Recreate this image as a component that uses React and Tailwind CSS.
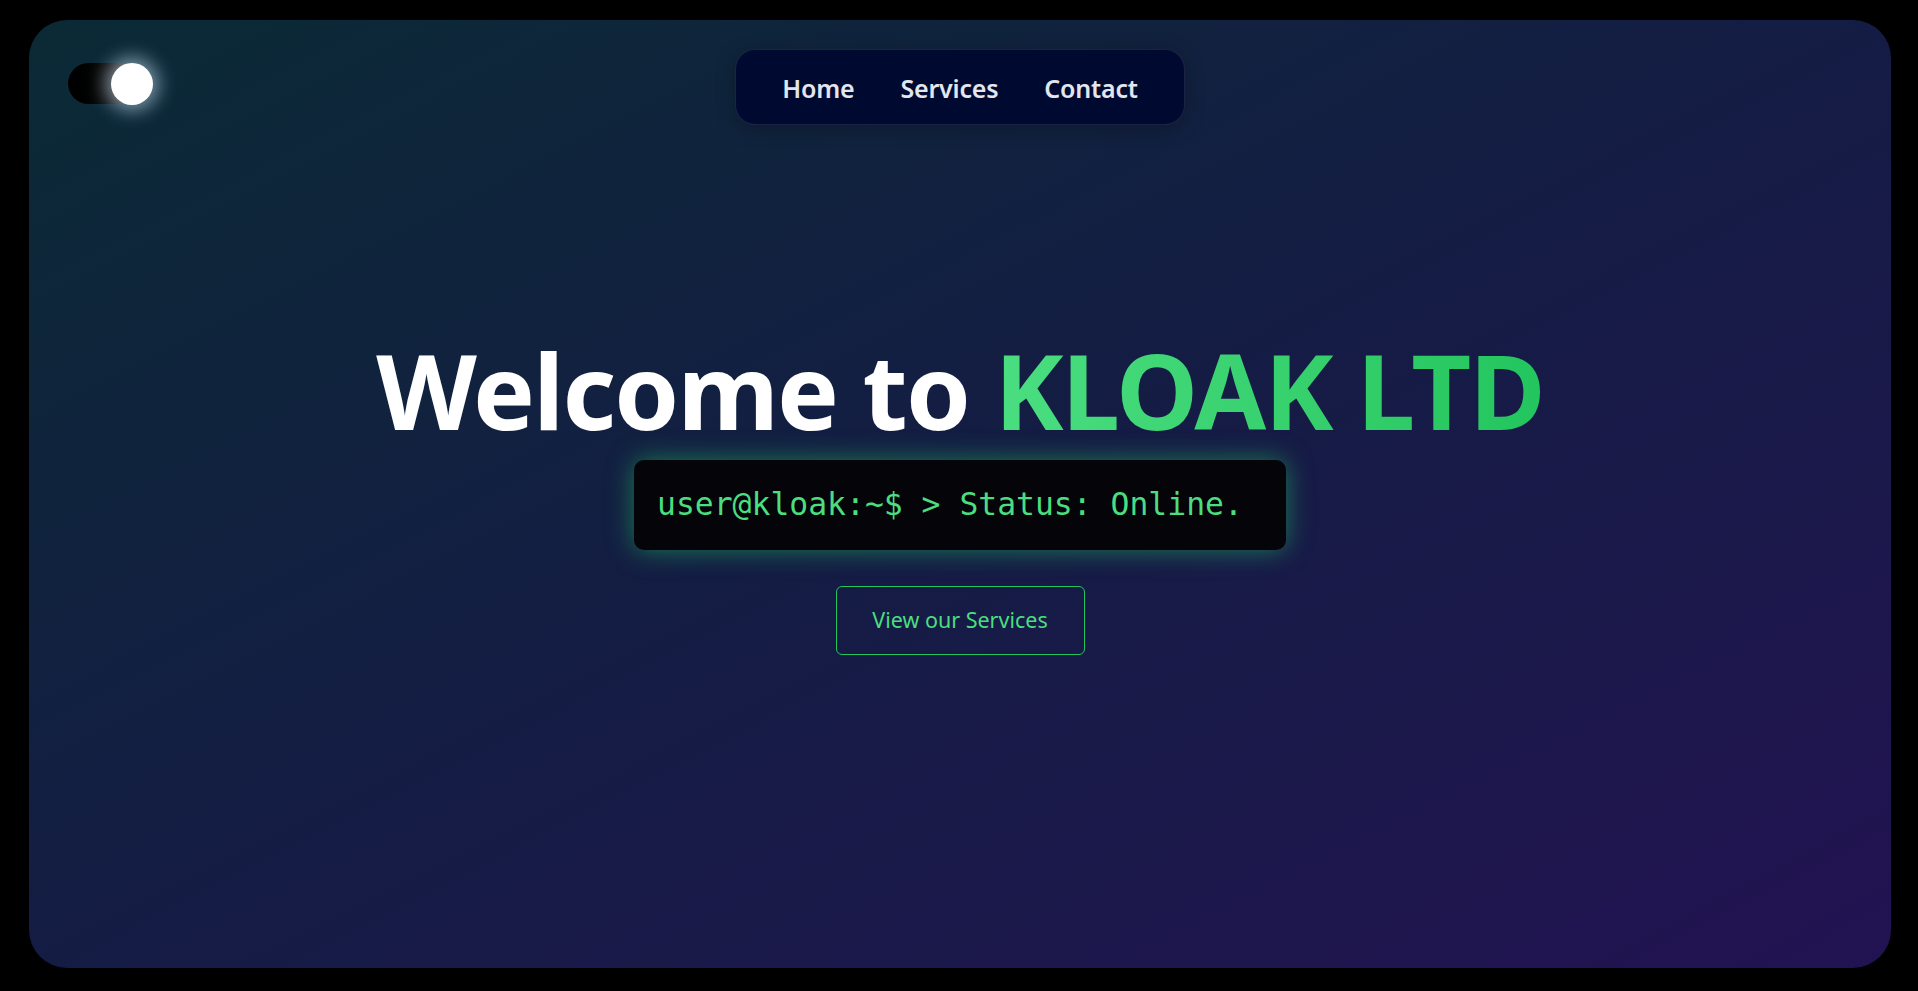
import { useState } from "react";

const navLinks = ["Home", "Services", "Contact"];

function ThemeToggle() {
  const [on, setOn] = useState(true);
  return (
    <button
      onClick={() => setOn(!on)}
      className="relative w-[84px] h-[41px] rounded-full bg-linear-to-r from-black via-[#111] to-[#555]"
    >
      <span className="absolute right-[-1px] top-[-0.5px] w-[42px] h-[42px] rounded-full bg-white shadow-[0_0_18px_6px_rgba(210,235,255,0.55)]" />
    </button>
  );
}

export default function App() {
  return (
    <div
      className="w-screen h-screen bg-black pt-[20px] pb-[23px] pl-[29px] pr-[27px]"
      style={{ fontFamily: '"Noto Sans", "Open Sans", sans-serif' }}
    >
      <div className="w-full h-full rounded-[38px] bg-linear-to-br from-[#0a2a35] via-[#141c44] to-[#221252] flex flex-col overflow-hidden">
        {/* header */}
        <header className="grid grid-cols-[1fr_auto_1fr] items-start px-[39px] pt-[29px] h-[106px]">
          <div className="flex items-center pt-[14px]">
            <ThemeToggle />
          </div>
          <nav className="flex items-center h-[76px] px-[23px] pt-[4px] rounded-[20px] border border-white/10 bg-[#000a30] shadow-[0_4px_20px_rgba(0,0,0,0.25)]">
            {navLinks.map((l) => (
              <a
                key={l}
                href="#"
                className="px-[23px] text-[25px] font-semibold text-[#e2e6ee] tracking-[-0.2px]"
              >
                {l}
              </a>
            ))}
          </nav>
          <div />
        </header>

        {/* hero */}
        <main className="flex-1 flex flex-col items-center justify-center">
          <h1 className="text-[104px] font-bold leading-[1.2] text-white tracking-[-1.8px]">
            Welcome to{" "}
            <span className="bg-linear-to-r from-[#4ade80] to-[#22c55e] bg-clip-text text-transparent">
              KLOAK LTD
            </span>
          </h1>
          <div className="mt-[7px] w-[652px] h-[90px] flex items-center pl-[23px] rounded-[10px] bg-[#040409] shadow-[0_0_26px_rgba(34,197,94,0.55)]">
            <span
              className="text-[31.4px] text-[#4ade80]"
              style={{ fontFamily: '"DejaVu Sans Mono", "Liberation Mono", monospace' }}
            >
              user@kloak:~$ &gt; Status: Online.
            </span>
          </div>
          <a
            href="#"
            className="mt-[36px] w-[249px] h-[69px] flex items-center justify-center rounded-[6px] border border-[#22c55e] text-[21.5px] text-[#4ade80]"
          >
            View our Services
          </a>
        </main>
        <div className="h-[111px]" />
      </div>
    </div>
  );
}
